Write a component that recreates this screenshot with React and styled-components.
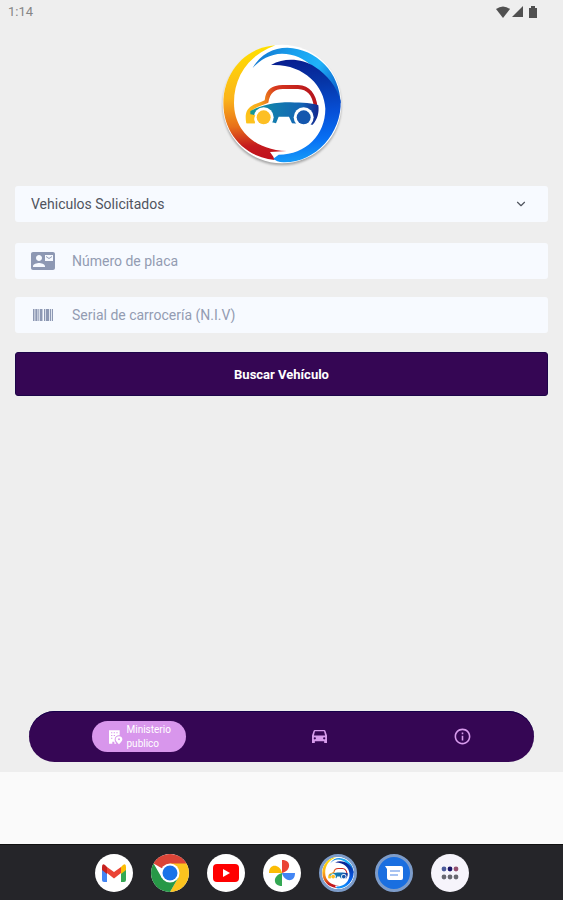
import React, { useState } from 'react';
import styled, { createGlobalStyle, css } from 'styled-components';
import { MdContactMail, MdInfoOutline } from 'react-icons/md';
import { FiChevronDown } from 'react-icons/fi';

const GlobalStyle = createGlobalStyle`
  * {
    box-sizing: border-box;
  }

  body {
    margin: 0;
    font-family: Roboto, "Liberation Sans", sans-serif;
    background: #fafafa;
  }

  button, input, select {
    font-family: inherit;
    margin: 0;
  }
`;

const Screen = styled.div`
  display: flex;
  flex-direction: column;
  min-height: 100vh;
`;

const AppArea = styled.div`
  display: flex;
  flex-direction: column;
  flex: 1;
  background: #eeeeee;
`;

const StatusBar = styled.header`
  display: flex;
  align-items: center;
  justify-content: space-between;
  height: 23px;
  padding: 0 24px 0 8px;
  font-size: 13px;
  color: #858585;
`;

const StatusIcons = styled.svg`
  width: 44px;
  height: 14px;
  fill: #505050;
`;

const LogoWrapper = styled.div`
  display: flex;
  justify-content: center;
  padding: 21px 0 22px;
`;

const StyledLogo = styled.svg`
  display: block;
  width: ${({ $size }) => $size}px;
  height: ${({ $size }) => $size}px;
  overflow: visible;
  ${({ $shadow }) => $shadow && css`
    filter: drop-shadow(0 2px 1px rgba(0,0,0,.3));
  `}
`;

const Form = styled.form`
  display: flex;
  flex-direction: column;
  gap: 18px;
  padding: 0 15px;
`;

const Field = styled.label`
  display: flex;
  align-items: center;
  height: 36px;
  padding: 0 16px;
  border-radius: 3px;
  background: #f7faff;
  color: #8d98b3;
`;

const SelectField = styled(Field)`
  margin-bottom: 3px;
  padding-right: 20px;
  color: #50545e;
`;

const StyledSelect = styled.select`
  flex: 1;
  min-width: 0;
  height: 100%;
  padding: 0;
  border: 0;
  outline: 0;
  appearance: none;
  background: transparent;
  font-size: 14px;
  color: #50545e;
`;

const FieldIcon = styled.span`
  display: flex;
  align-items: center;
  width: 41px;
`;

const StyledInput = styled.input`
  flex: 1;
  min-width: 0;
  height: 100%;
  padding: 0;
  border: 0;
  outline: 0;
  background: transparent;
  font-size: 14px;
  color: #50545e;

  &::placeholder {
    color: #939cb2;
    opacity: 1;
  }
`;

const SearchButton = styled.button`
  height: 44px;
  margin-top: 1px;
  border: 1px solid #1d0549;
  border-radius: 3px;
  background: #350654;
  color: #fff;
  font-size: 13px;
  font-weight: 700;
  cursor: pointer;
`;

const TabBar = styled.nav`
  display: flex;
  align-items: center;
  justify-content: space-around;
  height: 51px;
  margin: auto 29px 10px;
  box-shadow: inset 0 1px 0 #16004a;
  border-radius: 26px;
  background: #350654;
`;

const Tab = styled.button`
  display: flex;
  align-items: center;
  justify-content: center;
  width: 18px;
  height: 31px;
  padding: 0;
  border: 0;
  background: transparent;
  color: #d79bec;
  cursor: pointer;

  svg {
    flex-shrink: 0;
  }

  ${({ $active }) => $active && css`
    gap: 4px;
    width: 94px;
    border-radius: 16px;
    background: #d896ec;
    color: #fff;
  `}
`;

const TabText = styled.span`
  width: 44px;
  font-size: 10px;
  line-height: 14px;
  text-align: left;
`;

const GestureArea = styled.div`
  height: 72px;
  background: #fafafa;
`;

const Dock = styled.footer`
  display: flex;
  align-items: center;
  justify-content: center;
  gap: 18px;
  height: 56px;
  border-top: 1px solid #111;
  background: #252529;
`;

const DockButton = styled.button`
  display: flex;
  align-items: center;
  justify-content: center;
  width: 38px;
  height: 38px;
  padding: 0;
  border: ${({ $ring }) => ($ring ? '3px solid #7d9cc9' : '0')};
  border-radius: 50%;
  background: ${({ $bg }) => $bg || '#fff'};
  cursor: pointer;
`;

const Logo = ({ size, id, shadow }) => (
  <StyledLogo $size={size} $shadow={shadow} viewBox="30 24 360 360" aria-hidden="true">
    <defs>
      <linearGradient id={`${id}-warm`} gradientUnits="userSpaceOnUse" x1="120" y1="30" x2="140" y2="370">
        <stop offset="0" stopColor="#ffe000" />
        <stop offset=".45" stopColor="#fbb41a" />
        <stop offset=".7" stopColor="#e8701a" />
        <stop offset=".88" stopColor="#c41a1e" />
        <stop offset="1" stopColor="#c0101c" />
      </linearGradient>
      <linearGradient id={`${id}-cold`} gradientUnits="userSpaceOnUse" x1="130" y1="60" x2="375" y2="190">
        <stop offset="0" stopColor="#1478d0" />
        <stop offset=".35" stopColor="#18a0ee" />
        <stop offset=".65" stopColor="#20b4fa" />
        <stop offset="1" stopColor="#0a58c8" />
      </linearGradient>
      <linearGradient id={`${id}-deep`} gradientUnits="userSpaceOnUse" x1="260" y1="70" x2="290" y2="375">
        <stop offset="0" stopColor="#081e90" />
        <stop offset=".25" stopColor="#0636a8" />
        <stop offset=".55" stopColor="#0650d8" />
        <stop offset=".8" stopColor="#0870f4" />
        <stop offset="1" stopColor="#169cf8" />
      </linearGradient>
      <linearGradient id={`${id}-roof`} gradientUnits="userSpaceOnUse" x1="100" y1="250" x2="315" y2="180">
        <stop offset="0" stopColor="#ffc918" />
        <stop offset=".25" stopColor="#f6a51c" />
        <stop offset=".5" stopColor="#d8391e" />
        <stop offset="1" stopColor="#b5121c" />
      </linearGradient>
      <linearGradient id={`${id}-body`} gradientUnits="userSpaceOnUse" x1="115" y1="220" x2="320" y2="230">
        <stop offset="0" stopColor="#129a94" />
        <stop offset=".35" stopColor="#127cae" />
        <stop offset=".75" stopColor="#1464b4" />
        <stop offset="1" stopColor="#13258e" />
      </linearGradient>
    </defs>
    <circle cx="210" cy="204" r="178" fill="#fff" />
    <path
      fill={`url(#${id}-warm)`}
      d="M190 28C98 34 34 112 34 202C34 294 100 364 188 372L184 362L174 348L224 345C130 342 66 284 66 200C66 124 108 58 190 28Z"
    />
    <path
      fill={`url(#${id}-cold)`}
      d="M122 96C145 54 184 35 226 35C314 38 384 110 386 202L350 190C338 112 282 54 210 53C174 54 146 70 122 96Z"
    />
    <path
      fill={`url(#${id}-deep)`}
      d="M177 87C222 62 272 70 308 92C348 118 372 150 386 194C390 292 308 382 214 379C200 378 190 374 184 368L200 356C282 356 340 296 340 218C338 148 272 82 177 87Z"
    />
    <path
      fill={`url(#${id}-roof)`}
      d="M103 262C98 236 102 220 120 209C134 201 148 199 158 193C162 158 180 148 212 147H258C294 148 312 174 317 213L305 208C300 178 286 160 258 159H212C188 160 174 170 169 200C150 208 124 215 116 228L132 240L128 262Z"
    />
    <path
      fill={`url(#${id}-body)`}
      d="M115 225C150 206 190 199 235 199C270 200 306 202 319 208C322 230 316 252 302 266L240 262L231 242H200L192 262L140 248C132 236 124 236 115 236Z"
    />
    <circle cx="155" cy="244" r="30" fill="#fff" />
    <circle cx="275" cy="244" r="30" fill="#fff" />
    <circle cx="155" cy="244" r="21" fill="#fdbf24" />
    <circle cx="275" cy="244" r="21" fill="#1557ae" />
    <path d="M104 262C102 250 104 240 110 234L130 238C126 246 125 254 129 262Z" fill="#fdc21e" />
  </StyledLogo>
);

const BarcodeIcon = () => (
  <svg width="24" height="14" viewBox="0 0 24 14" fill="currentColor" aria-hidden="true">
    <path d="M2 1H3.500V13H2ZM4.300 1H6.500V13H4.300ZM7.300 1H8.300V13H7.300ZM9 1H11.500V13H9ZM13 1H14.300V13H13ZM15 1H18V13H15ZM18.800 1H20V13H18.800ZM20.800 1H22V13H20.800Z" />
  </svg>
);

const MinistryIcon = () => (
  <svg width="16" height="16" viewBox="0 0 24 24" fill="currentColor" aria-hidden="true">
    <path
      fillRule="evenodd"
      d="M3 2H19V9.5C15 9 11.5 12 11.5 15.5C11.5 18 12.5 20 14 22H11V19H8V22H3ZM6 5V6.500H8V5ZM10 5V6.500H12V5ZM14 5V6.500H16V5ZM6 9V10.500H8V9ZM10 9V10.500H12V9ZM6 13V14.500H8V13Z"
    />
    <path fillRule="evenodd" d="M18 11C15 11 13 13 13 15.5C13 19 18 23 18 23S23 19 23 15.5C23 13 21 11 18 11ZM18 14A1.5 1.5 0 1 1 18 17A1.5 1.5 0 1 1 18 14Z" />
  </svg>
);

const CarIcon = () => (
  <svg width="17" height="15" viewBox="0 0 18 16" fill="currentColor" aria-hidden="true">
    <path
      fillRule="evenodd"
      d="M4 1H14Q15 1 15.4 2L17 7V15H14V13H4V15H1V7L2.6 2Q3 1 4 1ZM4.2 2.5L3 7H15L13.8 2.5ZM4 8.7A1.2 1.2 0 1 0 4 11.1A1.2 1.2 0 1 0 4 8.7ZM14 8.7A1.2 1.2 0 1 0 14 11.1A1.2 1.2 0 1 0 14 8.7Z"
    />
  </svg>
);

const GmailIcon = () => (
  <svg width="26" height="20" viewBox="0 0 26 20" aria-hidden="true">
    <path d="M1 4V17Q1 19 3 19H6V8Z" fill="#4285f4" />
    <path d="M25 4V17Q25 19 23 19H20V8Z" fill="#34a853" />
    <path d="M20 4L22 2Q25 0 25 4V7L20 11Z" fill="#fbbc04" />
    <path d="M1 7V4Q1 0 4 2L6 4V11Z" fill="#c5221f" />
    <path d="M6 4L13 9L20 4V10L13 15.5L6 10Z" fill="#ea4335" />
  </svg>
);

const ChromeIcon = () => (
  <svg width="38" height="38" viewBox="0 0 38 38" aria-hidden="true">
    <path d="M19 19L2.6 9.5A19 19 0 0 1 35.4 9.5Z" fill="#db4437" />
    <path d="M19 9.5H35.4A19 19 0 0 1 19 38L27.2 23.8Z" fill="#fcc31e" />
    <path d="M2.6 9.5A19 19 0 0 0 19 38L27.2 23.8L10.8 23.8Z" fill="#279847" />
    <circle cx="19" cy="19" r="9.5" fill="#fff" />
    <circle cx="19" cy="19" r="7.5" fill="#1a73e8" />
  </svg>
);

const YoutubeIcon = () => (
  <svg width="26" height="20" viewBox="0 0 26 20" aria-hidden="true">
    <rect y="1" width="26" height="18" rx="4" fill="#f00" />
    <path d="M10 6L17 10L10 14Z" fill="#fff" />
  </svg>
);

const PhotosIcon = () => (
  <svg width="28" height="28" viewBox="0 0 28 28" aria-hidden="true">
    <path d="M14 1C24 1 23 12 14 14Z" fill="#ea4335" />
    <path d="M27 14C27 24 16 23 14 14Z" fill="#4285f4" />
    <path d="M14 27C4 27 5 16 14 14Z" fill="#34a853" />
    <path d="M1 14C1 4 12 5 14 14Z" fill="#fbbc04" />
  </svg>
);

const MessagesIcon = () => (
  <svg width="20" height="16" viewBox="0 0 20 16" aria-hidden="true">
    <path d="M1 1H17Q19 1 19 3V13Q19 15 17 15H5Q3 15 3 13V4Z" fill="#fff" />
    <path d="M6 6H16M6 10H14" stroke="#8ab0ee" strokeWidth="1.5" />
  </svg>
);

const AppsIcon = () => (
  <svg width="20" height="14" viewBox="0 0 20 14" aria-hidden="true">
    <circle cx="4" cy="3" r="2.4" fill="#4a5a9a" />
    <circle cx="10" cy="3" r="2.4" fill="#1a1468" />
    <circle cx="16" cy="3" r="2.4" fill="#945070" />
    <circle cx="4" cy="11" r="2.4" fill="#686870" />
    <circle cx="10" cy="11" r="2.4" fill="#686870" />
    <circle cx="16" cy="11" r="2.4" fill="#686870" />
  </svg>
);

const dockApps = [
  { name: 'Gmail', icon: <GmailIcon /> },
  { name: 'Chrome', icon: <ChromeIcon /> },
  { name: 'YouTube', icon: <YoutubeIcon /> },
  { name: 'Fotos', icon: <PhotosIcon /> },
  { name: 'Vehículos', icon: <Logo size={32} id="dock" />, ring: true },
  { name: 'Mensajes', icon: <MessagesIcon />, bg: '#1a6fe0', ring: true },
  { name: 'Aplicaciones', icon: <AppsIcon />, bg: '#f6f4fb' },
];

const App = () => {
  const [plate, setPlate] = useState('');
  const [serial, setSerial] = useState('');

  return (
    <Screen>
      <GlobalStyle />

      <AppArea>
        <StatusBar>
          <span>1:14</span>
          <StatusIcons viewBox="0 0 44 14" aria-hidden="true">
            <path d="M1 4Q8 -1 15 4L8 13Z" />
            <path d="M28 1V12H17Z" />
            <path d="M34 3H36V1H40V3H42V13H34Z" />
          </StatusIcons>
        </StatusBar>

        <LogoWrapper>
          <Logo size={120} id="main" shadow />
        </LogoWrapper>

        <Form onSubmit={(e) => e.preventDefault()}>
          <SelectField>
            <StyledSelect aria-label="Tipo de consulta">
              <option>Vehiculos Solicitados</option>
            </StyledSelect>
            <FiChevronDown size={14} />
          </SelectField>

          <Field>
            <FieldIcon><MdContactMail size={24} /></FieldIcon>
            <StyledInput
              aria-label="Número de placa"
              placeholder="Número de placa"
              value={plate}
              onChange={(e) => setPlate(e.target.value)}
            />
          </Field>

          <Field>
            <FieldIcon><BarcodeIcon /></FieldIcon>
            <StyledInput
              aria-label="Serial de carrocería"
              placeholder="Serial de carrocería (N.I.V)"
              value={serial}
              onChange={(e) => setSerial(e.target.value)}
            />
          </Field>

          <SearchButton type="submit">Buscar Vehículo</SearchButton>
        </Form>

        <TabBar>
          <Tab $active>
            <MinistryIcon />
            <TabText>Ministerio publico</TabText>
          </Tab>
          <Tab aria-label="Vehículos"><CarIcon /></Tab>
          <Tab aria-label="Información"><MdInfoOutline size={19} /></Tab>
        </TabBar>
      </AppArea>

      <GestureArea />

      <Dock>
        {dockApps.map(({ name, icon, bg, ring }) => (
          <DockButton key={name} aria-label={name} $bg={bg} $ring={ring}>
            {icon}
          </DockButton>
        ))}
      </Dock>
    </Screen>
  );
};

export default App;
